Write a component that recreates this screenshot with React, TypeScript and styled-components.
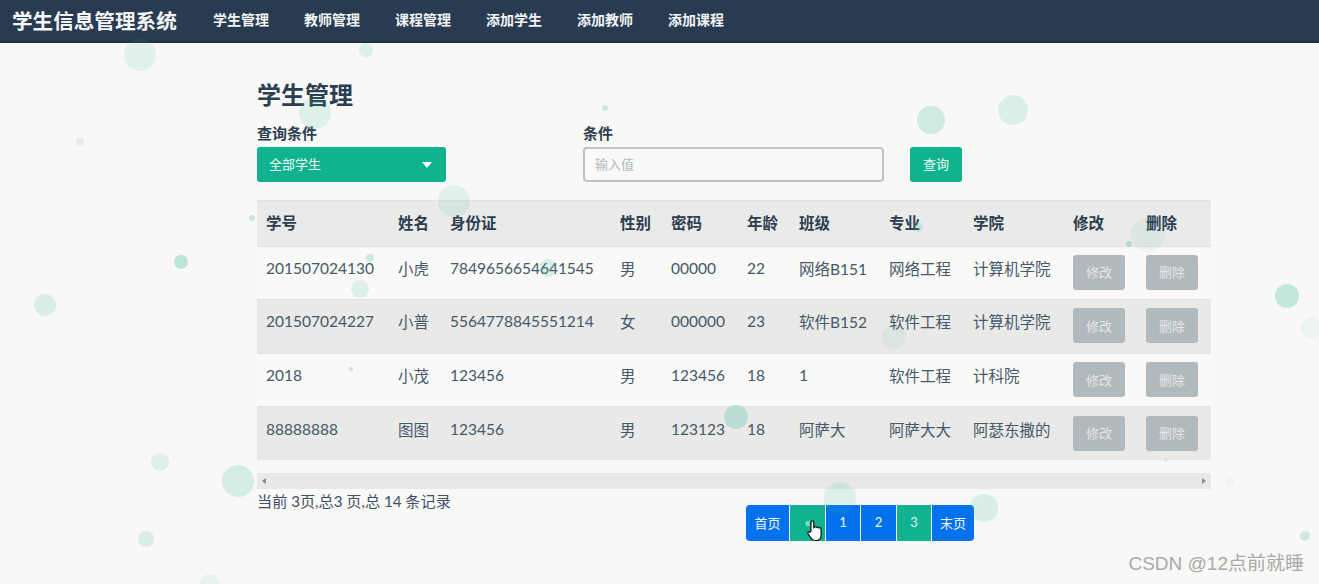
import React from "react";
import styled, { createGlobalStyle } from "styled-components";

const Global = createGlobalStyle`
  html, body { margin: 0; padding: 0; background: #f8f8f6; height: 584px; overflow: hidden; }
  body { font-family: Lato, "Noto Sans CJK SC", sans-serif; color: #34495e; }
`;

const Page = styled.div`
  position: relative;
  width: 1319px;
  height: 584px;
  overflow: hidden;
`;

const Navbar = styled.nav`
  height: 41px;
  background: #283b50;
  border-bottom: 2px solid #22313f;
  display: flex;
  align-items: center;
  padding-left: 12px;
`;

const Brand = styled.div`
  color: #f4f6f7;
  font-size: 20.6px;
  font-weight: 700;
  width: 201px;
  white-space: nowrap;
  margin-top: -1px;
`;

const NavLink = styled.a`
  color: #f2f4f5;
  font-size: 14px;
  font-weight: 700;
  width: 91px;
  white-space: nowrap;
  margin-top: -3px;
`;

const Content = styled.main`
  width: 954px;
  margin-left: 257px;
  padding-top: 35px;
`;

const Title = styled.h1`
  margin: 0;
  font-size: 24px;
  line-height: 34px;
  font-weight: 700;
  color: #2c3e50;
`;

const FilterRow = styled.div`
  display: flex;
  align-items: flex-end;
  margin-top: 11px;
`;

const Field = styled.div<{ $w: number; $mr: number }>`
  width: ${(p) => p.$w}px;
  margin-right: ${(p) => p.$mr}px;
  display: flex;
  flex-direction: column;
`;

const Label = styled.label`
  font-size: 15px;
  font-weight: 700;
  line-height: 20px;
  height: 20px;
  margin-bottom: 4px;
  color: #2c3e50;
`;

const Select = styled.div`
  height: 35px;
  box-sizing: border-box;
  background: #10b28f;
  border-radius: 3px;
  color: #f2fbf8;
  font-size: 13px;
  display: flex;
  align-items: center;
  justify-content: space-between;
  padding: 0 14px 3px 12px;
`;

const Caret = styled.span`
  width: 0;
  height: 0;
  margin-top: 3px;
  border-left: 5px solid transparent;
  border-right: 5px solid transparent;
  border-top: 6px solid #fff;
`;

const Input = styled.div`
  height: 35px;
  box-sizing: border-box;
  border: 2px solid #bdc3c7;
  border-radius: 4px;
  background: #f9f9f7;
  color: #b3b8bc;
  font-size: 13px;
  display: flex;
  align-items: center;
  padding: 0 0 2px 10px;
`;

const SearchButton = styled.button`
  width: 52px;
  height: 35px;
  border: 0;
  border-radius: 3px;
  background: #10b28f;
  color: #eafaf5;
  font: inherit;
  font-size: 13px;
  padding: 0 0 3px;
`;

const Table = styled.table`
  width: 954px;
  margin-top: 18px;
  border-collapse: collapse;
  table-layout: fixed;
  font-size: 15.5px;
`;

const HeadRow = styled.tr`
  height: 45.6px;
  background: #eaeae8;
  border-top: 1px solid #e3e4e2;
  border-bottom: 1px solid #dfe1e0;
`;

const Th = styled.th`
  text-align: left;
  padding: 0 0 2px 9px;
  font-size: 15.5px;
  font-weight: 700;
  color: #2c3e50;
`;

const Row = styled.tr<{ $alt: boolean }>`
  height: 53.6px;
  background: ${(p) => (p.$alt ? "#e9e9e7" : "#f9f9f7")};
  border-bottom: 1px solid #e0e1df;
  &:last-child { border-bottom: 0; }
`;

const Td = styled.td`
  padding: 0 0 10px 9px;
  color: #46586a;
  white-space: nowrap;
  overflow: hidden;
`;

const ActionCell = styled.td`
  padding: 0 0 1px 9px;
`;

const ActionButton = styled.button`
  display: block;
  width: 52px;
  height: 35px;
  border: 0;
  border-radius: 3px;
  background: #b2b9bd;
  color: #e4e7e8;
  font: inherit;
  font-size: 13px;
  padding: 0 0 1px;
`;

const Scrollbar = styled.div`
  height: 16px;
  margin-top: 13px;
  background: #e8e8e6;
  display: flex;
  align-items: center;
  justify-content: space-between;
  padding: 0 5px;
`;

const Arrow = styled.span<{ $right?: boolean }>`
  width: 0;
  height: 0;
  border-top: 3.5px solid transparent;
  border-bottom: 3.5px solid transparent;
  ${(p) => (p.$right ? "border-left: 4px solid #8a8d8e;" : "border-right: 4px solid #8a8d8e;")}
`;

const Footer = styled.div`
  display: flex;
  align-items: flex-start;
`;

const Summary = styled.div`
  width: 489px;
  font-size: 15.15px;
  line-height: 20px;
  margin-top: 2px;
  color: #3f5163;
  white-space: nowrap;
`;

const Pager = styled.div`
  display: flex;
  margin-top: 16px;
  border-radius: 4px;
  overflow: hidden;
  position: relative;
`;

const PageItem = styled.div<{ $w: number; $active?: boolean }>`
  width: ${(p) => p.$w}px;
  height: 36px;
  box-sizing: border-box;
  padding-bottom: 2px;
  display: flex;
  align-items: center;
  justify-content: center;
  background: ${(p) => (p.$active ? "#10b28f" : "#0271ee")};
  color: ${(p) => (p.$active ? "#d8f4ec" : "#f2f7fe")};
  font-size: 13px;
  margin-right: 1px;
  &:last-child { margin-right: 0; }
`;

const Bubble = styled.span<{ $x: number; $y: number; $r: number; $o: number }>`
  position: absolute;
  left: ${(p) => p.$x - p.$r}px;
  top: ${(p) => p.$y - p.$r}px;
  width: ${(p) => p.$r * 2}px;
  height: ${(p) => p.$r * 2}px;
  border-radius: 50%;
  background: #2fb79a;
  opacity: ${(p) => p.$o};
  pointer-events: none;
`;

const Cursor = styled.svg`
  position: absolute;
  left: 806px;
  top: 519px;
  width: 18px;
  height: 23px;
`;

const Watermark = styled.div`
  position: absolute;
  right: 15px;
  top: 553px;
  font-family: "Liberation Sans", "Noto Sans CJK SC", sans-serif;
  font-size: 19px;
  line-height: 22px;
  color: #a9aaa9;
  white-space: nowrap;
`;

const widths = [132, 52, 170, 51, 76, 52, 90, 84, 100, 73, 74];
const headers = ["学号", "姓名", "身份证", "性别", "密码", "年龄", "班级", "专业", "学院", "修改", "删除"];
const rows = [
  ["201507024130", "小虎", "7849656654641545", "男", "00000", "22", "网络B151", "网络工程", "计算机学院"],
  ["201507024227", "小普", "5564778845551214", "女", "000000", "23", "软件B152", "软件工程", "计算机学院"],
  ["2018", "小茂", "123456", "男", "123456", "18", "1", "软件工程", "计科院"],
  ["88888888", "图图", "123456", "男", "123123", "18", "阿萨大", "阿萨大大", "阿瑟东撒的"],
];
const bubbles: [number, number, number, number][] = [
  [140, 55, 16, 0.1], [366, 50, 7, 0.14], [315, 113, 16, 0.13], [605, 108, 3, 0.22], [931, 120, 14, 0.2],
  [1013, 110, 15, 0.14], [80, 142, 4, 0.12], [454, 201, 16, 0.1], [252, 218, 3, 0.25], [181, 262, 7, 0.3],
  [370, 258, 4, 0.22], [360, 289, 9, 0.13], [548, 268, 9, 0.16], [45, 305, 11, 0.15], [1287, 296, 12, 0.27],
  [1311, 328, 10, 0.07], [894, 337, 12, 0.08], [918, 227, 5, 0.18], [1148, 234, 17, 0.08], [1129, 244, 3, 0.28],
  [351, 369, 2, 0.28], [736, 417, 12, 0.25], [160, 462, 9, 0.12], [238, 481, 16, 0.18], [840, 498, 16, 0.13],
  [984, 508, 14, 0.15], [146, 539, 8, 0.16], [1305, 536, 5, 0.22], [210, 584, 10, 0.08], [1166, 460, 2, 0.14], [1230, 482, 4, 0.05],
];
const pages = [
  { t: "首页", w: 43 }, { t: "«", w: 35, a: true }, { t: "1", w: 34 }, { t: "2", w: 35 }, { t: "3", w: 34, a: true }, { t: "末页", w: 42 },
];

export default function App() {
  return (
    <Page>
      <Global />
      <Navbar>
        <Brand>学生信息管理系统</Brand>
        {["学生管理", "教师管理", "课程管理", "添加学生", "添加教师", "添加课程"].map((n) => (
          <NavLink key={n}>{n}</NavLink>
        ))}
      </Navbar>
      <Content>
        <Title>学生管理</Title>
        <FilterRow>
          <Field $w={189} $mr={137}>
            <Label>查询条件</Label>
            <Select>全部学生<Caret /></Select>
          </Field>
          <Field $w={301} $mr={26}>
            <Label>条件</Label>
            <Input>输入值</Input>
          </Field>
          <SearchButton>查询</SearchButton>
        </FilterRow>
        <Table>
          <colgroup>
            {widths.map((w, i) => <col key={i} width={w} />)}
          </colgroup>
          <thead>
            <HeadRow>{headers.map((h) => <Th key={h}>{h}</Th>)}</HeadRow>
          </thead>
          <tbody>
            {rows.map((r, i) => (
              <Row key={r[0]} $alt={i % 2 === 1}>
                {r.map((c, j) => <Td key={j}>{c}</Td>)}
                <ActionCell><ActionButton>修改</ActionButton></ActionCell>
                <ActionCell><ActionButton>删除</ActionButton></ActionCell>
              </Row>
            ))}
          </tbody>
        </Table>
        <Scrollbar><Arrow /><Arrow $right /></Scrollbar>
        <Footer>
          <Summary>当前 3页,总3 页,总 14 条记录</Summary>
          <Pager>
            {pages.map((p) => <PageItem key={p.t} $w={p.w} $active={p.a}>{p.t}</PageItem>)}
          </Pager>
        </Footer>
      </Content>
      {bubbles.map(([x, y, r, o], i) => <Bubble key={i} $x={x} $y={y} $r={r} $o={o} />)}
      <Cursor viewBox="0 0 18 23">
        <path d="M5 12V3.2a1.4 1.4 0 0 1 2.8 0V9l.4-.6a1.3 1.3 0 0 1 2.4.3 1.3 1.3 0 0 1 2.3.4 1.3 1.3 0 0 1 2.2 1V16c0 3-1.6 5.5-4.6 5.5H9c-2 0-3.2-1-4.2-2.6L2 14.6c-.8-1.3 1.2-2.6 2.1-1.3z" fill="#fff" stroke="#111" strokeWidth="1.2" strokeLinejoin="round" />
      </Cursor>
      <Watermark>CSDN @12点前就睡</Watermark>
    </Page>
  );
}
